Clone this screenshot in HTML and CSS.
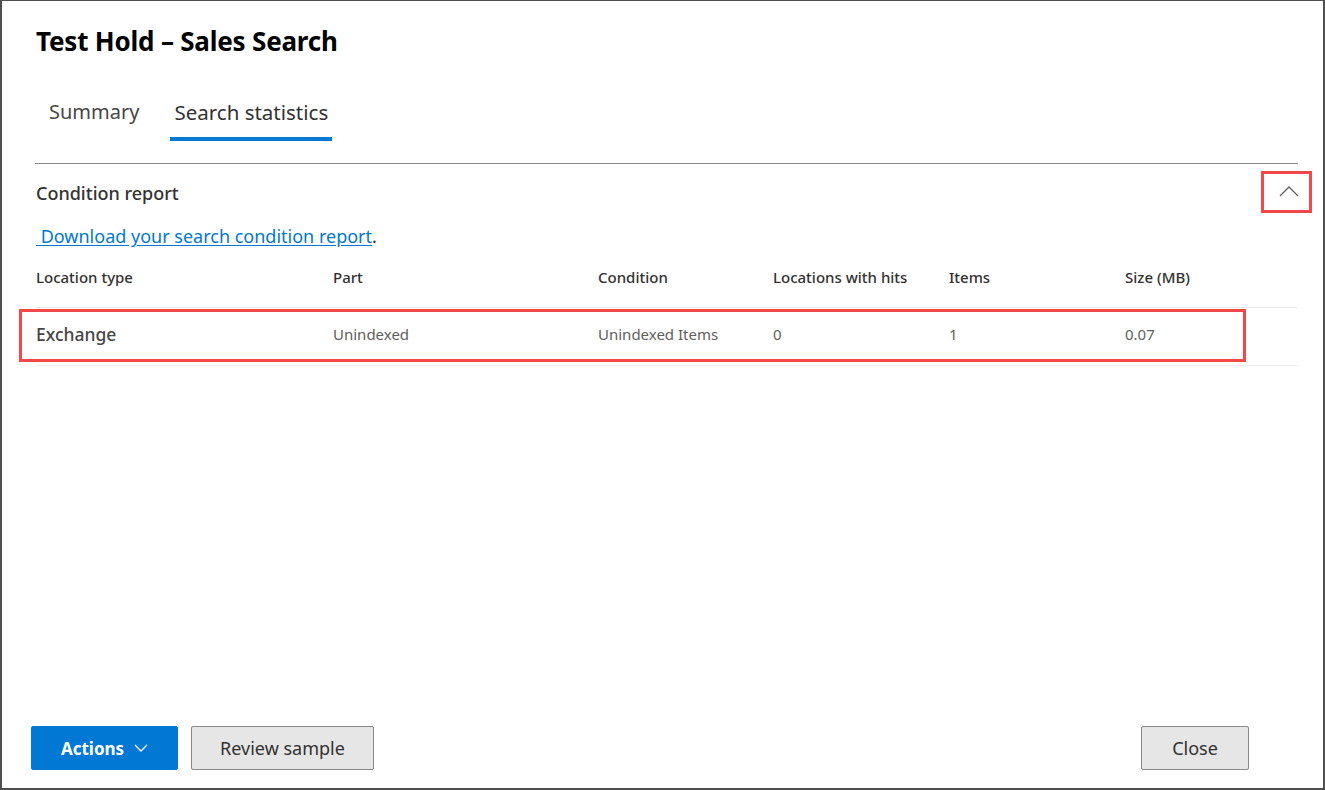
FILE: index.html
```html
<!DOCTYPE html>
<html lang="en">
<head>
<meta charset="utf-8">
<title>Test Hold – Sales Search</title>
<link rel="stylesheet" href="styles.css">
</head>
<body>
<div class="dialog">
  <h1 class="title">Test Hold – Sales Search</h1>
  <div class="tabs">
    <div class="tab">Summary</div>
    <div class="tab active">Search statistics</div>
  </div>
  <div class="section">
    <div class="section-head">
      <div class="section-title">Condition report</div>
      <button class="collapse">
        <svg width="20" height="12" viewBox="0 0 20 12"><path d="M1 11 L10 2 L19 11" fill="none" stroke="#605e5c" stroke-width="1.3"/></svg>
        <span class="mark mark-btn"></span>
      </button>
    </div>
    <div class="link-line"><a href="#" class="link">&nbsp;Download your search condition report</a>.</div>
    <div class="table">
      <div class="row head">
        <div>Location type</div>
        <div>Part</div>
        <div>Condition</div>
        <div>Locations with hits</div>
        <div>Items</div>
        <div>Size (MB)</div>
      </div>
      <div class="row data">
        <div class="loc">Exchange</div>
        <div>Unindexed</div>
        <div>Unindexed Items</div>
        <div>0</div>
        <div>1</div>
        <div>0.07</div>
        <span class="mark mark-row"></span>
      </div>
    </div>
  </div>
  <div class="footer">
    <button class="btn primary">Actions
      <svg width="14" height="8" viewBox="0 0 14 8"><path d="M1 1 L7 7 L13 1" fill="none" stroke="#fff" stroke-width="1.3"/></svg>
    </button>
    <button class="btn review">Review sample</button>
    <button class="btn close">Close</button>
  </div>
</div>
</body>
</html>
```

FILE: styles.css
```css
* { box-sizing: border-box; }
html, body { margin: 0; padding: 0; background: #fff; }
body { font-family: "Noto Sans", "Open Sans", sans-serif; color: #323130; }

.dialog {
  width: 1325px;
  height: 790px;
  border: 2px solid #4f4f4f;
  border-top-width: 1px;
  display: flex;
  flex-direction: column;
  padding: 0 25px 18px 33px;
}

.title {
  margin: 22px 0 0 1px;
  font-size: 26px;
  line-height: 36px;
  font-weight: 700;
  color: #000;
  letter-spacing: -0.2px;
}

.tabs {
  display: flex;
  margin-top: 39px;
  margin-left: 10px;
  gap: 27px;
}
.tab {
  font-size: 20px;
  line-height: 28px;
  color: #484644;
  padding: 0 4px 11px 4px;
  border-bottom: 4px solid transparent;
}
.tab.active {
  color: #323130;
  border-bottom-color: #0078d4;
  font-size: 20.5px;
}

.section {
  margin-top: 22px;
  border-top: 1px solid #8a8886;
}
.section-head {
  display: flex;
  justify-content: space-between;
  align-items: center;
  height: 58px;
  padding-top: 2px;
  padding-left: 1px;
}
.section-title {
  font-size: 18px;
  font-weight: 500;
  color: #323130;
  margin-top: -3px;
}
.collapse {
  position: relative;
  width: 51px;
  height: 42px;
  margin-right: -14px;
  margin-top: -4px;
  border: 0;
  background: transparent;
  padding: 0;
  display: flex;
  align-items: center;
  justify-content: center;
}
.collapse svg { margin-top: -2px; margin-left: 5px; }

.mark {
  position: absolute;
  border: 3px solid #f2484a;
  pointer-events: none;
}
.mark-btn { left: 0; top: 0; right: 0; bottom: 0; }

.link-line {
  font-size: 18px;
  line-height: 24px;
  color: #323130;
  margin-top: 2px;
  margin-left: 1px;
}
.link {
  color: #0078d4;
  text-decoration: underline;
  text-underline-offset: 2px;
}

.table { margin-top: 9px; }
.row {
  display: grid;
  grid-template-columns: 297px 265px 175px 176px 176px 1fr;
  align-items: center;
  padding-left: 1px;
  position: relative;
}
.row.head {
  height: 51px;
  font-size: 15px;
  font-weight: 500;
  color: #323130;
  border-bottom: 1px solid #edebe9;
  padding-bottom: 10px;
}
.row.data {
  height: 58px;
  font-size: 15px;
  color: #605e5c;
  border-bottom: 1px solid #edebe9;
  padding-bottom: 5px;
}
.row.data .loc {
  font-size: 17.5px;
  font-weight: 500;
  color: #484644;
}
.mark-row {
  left: -16px;
  top: 1px;
  width: 1227px;
  bottom: 3px;
}

.footer {
  margin-top: auto;
  display: flex;
  align-items: center;
  gap: 13px;
  margin-left: -4px;
  margin-right: 49px;
}
.btn {
  height: 44px;
  font-family: inherit;
  font-size: 18px;
  border-radius: 2px;
  border: 1px solid #8a8886;
  background: #e6e6e6;
  color: #323130;
  padding: 0;
  display: flex;
  align-items: center;
  justify-content: center;
  gap: 10px;
}
.btn.primary {
  background: #0078d4;
  border-color: #0078d4;
  color: #fff;
  font-weight: 700;
  font-size: 17px;
  width: 147px;
}
.btn.review { width: 183px; }
.btn.close { margin-left: auto; width: 108px; }
```
